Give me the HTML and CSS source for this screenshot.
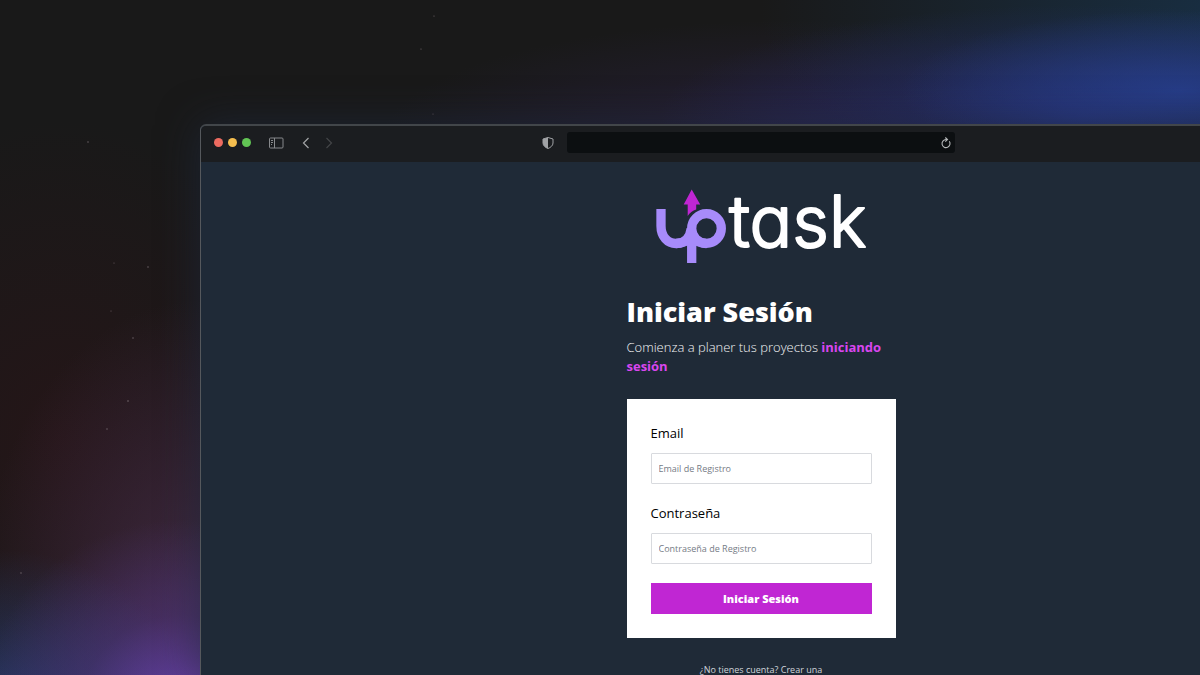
FILE: index.html
```html
<!DOCTYPE html>
<html lang="es">
<head>
<meta charset="utf-8">
<meta name="viewport" content="width=device-width, initial-scale=1">
<title>UpTask</title>
<link rel="stylesheet" href="styles.css">
</head>
<body>
<div class="backdrop">
  <svg class="stars" width="560" height="675" viewBox="0 0 560 675" fill="#75696f" aria-hidden="true">
    <circle cx="434" cy="16" r=".6"/><circle cx="421" cy="49" r=".6"/><circle cx="433" cy="114" r=".5"/>
    <circle cx="88" cy="142" r=".7"/><circle cx="114" cy="263" r=".5"/><circle cx="148" cy="267" r=".7"/>
    <circle cx="111" cy="311" r=".5"/><circle cx="133" cy="338" r=".7"/><circle cx="128" cy="401" r=".8"/>
    <circle cx="107" cy="429" r=".7"/><circle cx="21" cy="573" r=".7"/>
  </svg>
  <div class="window">
    <header class="toolbar">
      <div class="tools">
        <div class="lights"><span class="light red"></span><span class="light yellow"></span><span class="light green"></span></div>
        <button class="tool sidebar" aria-label="Barra lateral">
          <svg width="16" height="12" viewBox="0 0 16 12" fill="none" stroke="#87898c"><rect x="1.500" y="1" width="13.500" height="10" rx="1"/><path d="M6.500 1v10M3 3.500h2M3 5.500h2M3 7.500h1"/></svg>
        </button>
        <button class="tool" aria-label="Atrás">
          <svg width="8" height="12" viewBox="0 0 8 12" fill="none" stroke="#a2a4a6" stroke-width="1.2"><path d="M6.500 1 1.500 6l5 5"/></svg>
        </button>
        <button class="tool" aria-label="Adelante">
          <svg width="8" height="12" viewBox="0 0 8 12" fill="none" stroke="#434547" stroke-width="1.200"><path d="m1.500 1 5 5-5 5"/></svg>
        </button>
      </div>
      <div class="address">
        <svg class="shield" width="12" height="12" viewBox="0 0 12 12"><path d="M6 .5 11 2v4c0 2.700-2.600 4.600-5 5.500C3.600 10.600 1 8.700 1 6V2z" fill="none" stroke="#a0a2a5"/><path d="M6 .5v11C3.600 10.600 1 8.700 1 6V2z" fill="#a0a2a5"/></svg>
        <div class="field">
          <input class="url" type="text" aria-label="Dirección">
          <button class="reload" aria-label="Recargar">
            <svg width="12" height="12" viewBox="0 0 12 12" fill="none" stroke="#b4b7b9" stroke-width="1.100"><path d="M9.300 4.300A4 4 0 1 1 6 2.600h1"/><path d="m5.300.5 2.200 2.100-2.200 2.100"/></svg>
          </button>
        </div>
      </div>
      <div class="spacer"></div>
    </header>
    <main class="login">
      <svg class="logo" viewBox="0 0 216 80" role="img" aria-label="uptask">
        <g fill="none" stroke="#a78bfa" stroke-width="9.300">
          <path d="M8 21v17c0 10.500 6.500 17.500 15 17.500 9 0 14-6 15.200-15"/>
          <path d="M38.700 75V43"/>
          <circle cx="53.500" cy="40.500" r="14.800"/>
          <path d="M23 55.500c8 0 12-3 15.500-6 3.500 3 7.500 6 15 6"/>
        </g>
        <path fill="#c026d3" d="m38.700 1.500 8.500 15h-4v5c-3.500 1.300-6.500 3-8.500 6.500V16.500h-4z"/>
        <text class="wordmark" x="76" y="59">task</text>
      </svg>
      <h1 class="title">Iniciar Sesión</h1>
      <p class="lead">Comienza a planer tus proyectos <strong>iniciando sesión</strong></p>
      <form class="card">
        <label class="label" for="email">Email</label>
        <input class="input" id="email" type="email" placeholder="Email de Registro">
        <label class="label" for="password">Contraseña</label>
        <input class="input" id="password" type="password" placeholder="Contraseña de Registro">
        <button class="submit" type="submit">Iniciar Sesión</button>
      </form>
      <a class="signup" href="#">¿No tienes cuenta? Crear una</a>
    </main>
  </div>
</div>
</body>
</html>
```
FILE: styles.css
```css
* { box-sizing: border-box; }
body { margin: 0; font-family: "Open Sans", "Noto Sans", sans-serif; background: #191919; }
button { border: 0; padding: 0; background: none; font-family: inherit; }

.backdrop {
  position: relative;
  height: 100vh;
  overflow: hidden;
  padding: 124px 0 0 200px;
  background:
    radial-gradient(ellipse 200px 190px at 180px 710px, rgba(112, 70, 190, .85), rgba(90, 58, 150, .4) 50%, transparent),
    radial-gradient(ellipse 200px 170px at 0 720px, rgba(42, 66, 125, .8), transparent),
    radial-gradient(ellipse 220px 300px at 200px 600px, rgba(85, 52, 92, .6), transparent),
    radial-gradient(ellipse 260px 320px at 60px 440px, rgba(48, 18, 22, .5), transparent),
    radial-gradient(ellipse 280px 80px at 1180px 90px, rgba(40, 66, 150, .75), transparent),
    radial-gradient(ellipse 420px 110px at 1080px 115px, rgba(40, 48, 126, .75), transparent),
    radial-gradient(ellipse 480px 200px at 1240px 10px, rgba(24, 48, 70, .95), transparent),
    radial-gradient(ellipse 420px 120px at 800px 140px, rgba(52, 38, 88, .5), transparent),
    #191919;
}
.stars { position: absolute; left: 0; top: 0; }

.window {
  position: relative;
  height: 100%;
  margin-right: -122px;
  border: 1px solid #55585c;
  border-top-width: 2px;
  border-top-color: #42464a;
  border-bottom: 0;
  border-radius: 6px 6px 0 0;
  background: #1f2a37;
  box-shadow: 0 0 40px rgba(31, 44, 66, .6);
}

.toolbar {
  display: grid;
  grid-template-columns: 1fr 438px 1fr;
  align-items: center;
  height: 36px;
  padding: 0 13px 3px;
  border-radius: 5px 5px 0 0;
  background: #1b1d20;
}
.tools, .lights, .address { display: flex; align-items: center; }
.lights { gap: 5px; margin-right: 17px; }
.light { width: 9px; height: 9px; border-radius: 50%; }
.red { background: #ed6b60; }
.yellow { background: #f5be4f; }
.green { background: #62c554; }
.tool { display: flex; margin-right: 15px; }
.sidebar { margin-right: 18px; }
.address { gap: 13px; padding-right: 25px; }
.field { position: relative; flex: 1; display: flex; }
.url { width: 100%; height: 21px; border: 0; border-radius: 3px; background: #0c0f11; color: #b4b7b9; }
.reload { position: absolute; right: 3px; top: 5px; display: flex; }

.login {
  display: flex;
  flex-direction: column;
  width: 269px;
  margin: 0 auto;
  padding-top: 26px;
}
.logo { width: 216px; height: 80px; align-self: center; overflow: visible; }
.wordmark {
  font-family: Inter, sans-serif;
  font-size: 71px;
  font-weight: 300;
  font-feature-settings: "cv11";
  fill: #fff;
  stroke: #fff;
  stroke-width: 2px;
  stroke-linejoin: round;
}
.title { margin: 24px 0 0; font-size: 27px; line-height: 40px; font-weight: 800; color: #fff; white-space: nowrap; }
.lead { margin: 6px 0 23px; font-size: 13px; line-height: 19px; font-weight: 300; color: #f3f4f6; }
.lead strong { font-weight: 700; color: #d946ef; }

.card { display: flex; flex-direction: column; padding: 24px; background: #fff; }
.label { font-size: 13px; line-height: 20px; color: #000; }
.input {
  height: 31px;
  margin: 10px 0 19px;
  padding: 0 7px;
  border: 1px solid #d8dade;
  border-radius: 1px;
  font-family: inherit;
  font-size: 9px;
  color: #111;
}
.input::placeholder { color: #757b85; }
.submit { height: 31px; background: #c026d3; color: #fff; font-size: 11px; font-weight: 800; }
.signup { margin-top: 24px; font-size: 9px; line-height: 15px; text-align: center; text-decoration: none; color: #d1d5db; }
```
